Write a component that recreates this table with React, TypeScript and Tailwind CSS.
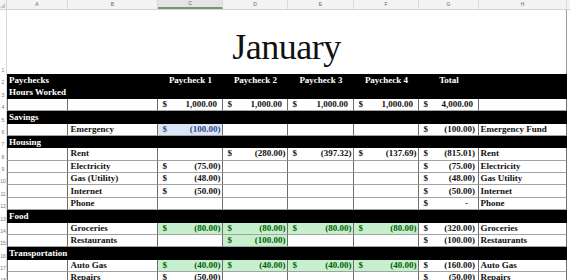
import React from "react";

const cols = "grid grid-cols-[7px_61px_90px_65px_65px_66px_65px_60px_88px_3px]";
const serif = "font-['Liberation_Serif','Times_New_Roman',serif]";

type Money = { v: string; neg?: boolean; fill?: "green" | "blue" };

type DataRow = {
  n: number;
  kind: "data";
  b?: string;
  c?: Money;
  d?: Money;
  e?: Money;
  f?: Money;
  g?: Money;
  h?: string;
};

type BandRow = {
  n: number;
  kind: "band";
  labels: (string | undefined)[];
};

const rows: (DataRow | BandRow)[] = [
  { n: 2, kind: "band", labels: ["Paychecks", "", "Paycheck 1", "Paycheck 2", "Paycheck 3", "Paycheck 4", "Total", ""] },
  { n: 3, kind: "band", labels: ["Hours Worked"] },
  {
    n: 4,
    kind: "data",
    c: { v: "1,000.00" },
    d: { v: "1,000.00" },
    e: { v: "1,000.00" },
    f: { v: "1,000.00" },
    g: { v: "4,000.00" },
  },
  { n: 5, kind: "band", labels: ["Savings"] },
  {
    n: 6,
    kind: "data",
    b: "Emergency",
    c: { v: "(100.00)", neg: true, fill: "blue" },
    g: { v: "(100.00)", neg: true },
    h: "Emergency Fund",
  },
  { n: 7, kind: "band", labels: ["Housing"] },
  {
    n: 8,
    kind: "data",
    b: "Rent",
    d: { v: "(280.00)", neg: true },
    e: { v: "(397.32)", neg: true },
    f: { v: "(137.69)", neg: true },
    g: { v: "(815.01)", neg: true },
    h: "Rent",
  },
  { n: 9, kind: "data", b: "Electricity", c: { v: "(75.00)", neg: true }, g: { v: "(75.00)", neg: true }, h: "Electricity" },
  { n: 10, kind: "data", b: "Gas (Utility)", c: { v: "(48.00)", neg: true }, g: { v: "(48.00)", neg: true }, h: "Gas Utility" },
  { n: 11, kind: "data", b: "Internet", c: { v: "(50.00)", neg: true }, g: { v: "(50.00)", neg: true }, h: "Internet" },
  { n: 12, kind: "data", b: "Phone", g: { v: "-" }, h: "Phone" },
  { n: 13, kind: "band", labels: ["Food"] },
  {
    n: 14,
    kind: "data",
    b: "Groceries",
    c: { v: "(80.00)", neg: true, fill: "green" },
    d: { v: "(80.00)", neg: true, fill: "green" },
    e: { v: "(80.00)", neg: true, fill: "green" },
    f: { v: "(80.00)", neg: true, fill: "green" },
    g: { v: "(320.00)", neg: true },
    h: "Groceries",
  },
  {
    n: 15,
    kind: "data",
    b: "Restaurants",
    d: { v: "(100.00)", neg: true, fill: "green" },
    g: { v: "(100.00)", neg: true },
    h: "Restaurants",
  },
  { n: 16, kind: "band", labels: ["Transportation"] },
  {
    n: 17,
    kind: "data",
    b: "Auto Gas",
    c: { v: "(40.00)", neg: true, fill: "green" },
    d: { v: "(40.00)", neg: true, fill: "green" },
    e: { v: "(40.00)", neg: true, fill: "green" },
    f: { v: "(40.00)", neg: true, fill: "green" },
    g: { v: "(160.00)", neg: true },
    h: "Auto Gas",
  },
  { n: 18, kind: "data", b: "Repairs", c: { v: "(50.00)", neg: true }, g: { v: "(50.00)", neg: true }, h: "Repairs" },
];

const letters = ["A", "B", "C", "D", "E", "F", "G", "H"];

function RowNum({ n }: { n: number }) {
  return (
    <div className="flex items-end justify-center pb-[1px] bg-white border-r border-[#dadada] text-[5px] leading-none text-[#777] font-['Liberation_Sans',sans-serif]">
      {n}
    </div>
  );
}

function MoneyCell({ m, total }: { m?: Money; total?: boolean }) {
  const cell = "flex items-center justify-between border-r border-b border-r-[#6e6e6e] border-b-[#a3a3a3] leading-none font-bold";
  if (!m) return <div className={`${cell} bg-white`} />;
  const fill =
    m.fill === "green"
      ? "bg-[#c6efce] text-[#006100]"
      : m.fill === "blue"
        ? "bg-[#dbe5f5] text-[#2c4a86]"
        : "bg-white text-[#111]";
  const pr = m.v === "-" ? "pr-[10px]" : m.neg ? (total ? "pr-[3px]" : "pr-[1.5px]") : "pr-[5px]";
  return (
    <div className={`${cell} ${fill}`}>
      <span className="pl-[4.5px]">$</span>
      <span className={pr}>{m.v}</span>
    </div>
  );
}

function Band({ row }: { row: BandRow }) {
  return (
    <div className={`${cols} h-[12.375px]`}>
      <RowNum n={row.n} />
      {letters.map((l, i) => {
        const text = row.labels[i];
        return (
          <div
            key={l}
            className={`bg-black text-white font-bold leading-none flex items-center whitespace-nowrap overflow-visible ${
              i === 0 ? "pl-[2px] relative z-10" : "justify-center"
            }`}
          >
            {text}
          </div>
        );
      })}
      <div className="bg-white" />
    </div>
  );
}

function Data({ row }: { row: DataRow }) {
  const text = "flex items-center border-r border-b border-r-[#6e6e6e] border-b-[#a3a3a3] bg-white leading-none whitespace-nowrap text-[#111] font-bold";
  return (
    <div className={`${cols} h-[12.375px]`}>
      <RowNum n={row.n} />
      <div className={`${text} border-l border-l-[#6e6e6e]`} />
      <div className={`${text} pl-[2.5px]`}>{row.b}</div>
      <MoneyCell m={row.c} />
      <MoneyCell m={row.d} />
      <MoneyCell m={row.e} />
      <MoneyCell m={row.f} />
      <MoneyCell m={row.g} total />
      <div className={`${text} pl-[1.5px]`}>{row.h}</div>
      <div className="bg-white" />
    </div>
  );
}

export default function App() {
  return (
    <div className={`w-[570px] h-[280px] overflow-hidden bg-white text-[9px] ${serif}`}>
      <div className={`${cols} h-[10px] bg-[#f3f3f3] border-b border-[#d2d2d2]`}>
        <div className="relative border-r border-[#d2d2d2]">
          <svg className="absolute right-[1px] bottom-[1px]" width="5" height="5" viewBox="0 0 5 5">
            <polygon points="5,0 5,5 0,5" fill="#c8c8c8" />
          </svg>
        </div>
        {letters.map((l) => (
          <div
            key={l}
            className={`flex items-center justify-center text-[5px] leading-none text-[#666] border-r border-[#dadada] font-['Liberation_Sans',sans-serif] ${
              l === "C" ? "bg-[#e4e4e4] border-b-2 border-b-[#6f9a78]" : ""
            }`}
          >
            {l}
          </div>
        ))}
        <div />
      </div>

      <div className={`${cols} h-[64px]`}>
        <RowNum n={1} />
        <div className="col-span-8 flex items-end justify-center pb-[9px] border-r border-[#9a9a9a]">
          <span className="text-[36px] leading-[36px] text-[#111] tracking-[-0.5px]">January</span>
        </div>
        <div />
      </div>

      {rows.map((r) => (r.kind === "band" ? <Band key={r.n} row={r} /> : <Data key={r.n} row={r} />))}
    </div>
  );
}
